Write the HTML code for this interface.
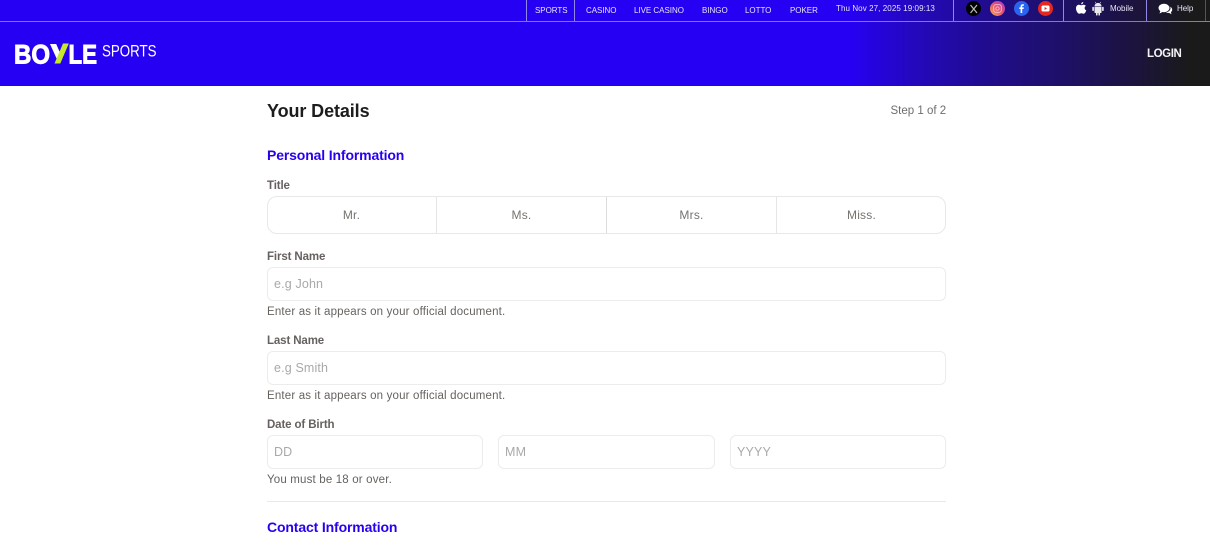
<!DOCTYPE html>
<html lang="en">
<head>
<meta charset="utf-8">
<title>Your Details</title>
<style>
html,body{margin:0;padding:0;width:1210px;height:548px;overflow:hidden;background:#fff;font-family:"Liberation Sans",sans-serif}
.a{position:absolute;white-space:nowrap}
#hd{position:absolute;left:0;top:0;width:1210px;height:86px;background:linear-gradient(90deg,#2600f2 0,#2600f2 850px,#2408c0 910px,#200c90 980px,#1e1068 1060px,#1c1340 1130px,#1a1a1a 1190px)}
#ln{position:absolute;left:0;top:21px;width:1210px;height:1px;background:#7f76e0}
.nv{position:absolute;top:6px;font-size:8px;line-height:10px;color:#e6e4ff;white-space:nowrap;letter-spacing:-.03px}
.vl{position:absolute;top:0;width:1px;height:21px;background:#8f88e8}
.ci{position:absolute;top:1px;width:15px;height:15px;border-radius:50%}
.lb{position:absolute;left:267px;font-size:11.5px;line-height:14px;font-weight:bold;color:#66615f;white-space:nowrap;letter-spacing:-.12px}
.ip{position:absolute;box-sizing:border-box;height:34px;border:1px solid #ececec;border-radius:6px;background:#fff;color:#aaa9a8;font-size:12.5px;line-height:32px;padding-left:6px;letter-spacing:.15px}
.hp{position:absolute;left:267px;font-size:11.5px;line-height:14px;color:#66625f;white-space:nowrap;letter-spacing:.17px}
.sec{position:absolute;left:267px;font-size:14px;line-height:18px;font-weight:bold;color:#2800f0;white-space:nowrap;letter-spacing:-.14px}
.tt{position:absolute;top:197px;height:36px;line-height:36px;text-align:center;font-size:12px;color:#77736f;letter-spacing:.2px}
.dv{position:absolute;top:197px;width:1px;height:36px;background:#e6e6e6}
</style>
</head>
<body>
<div id="hd"></div>
<div id="ln"></div>

<div class="vl" style="left:526px"></div>
<div class="vl" style="left:574px"></div>
<div class="nv" style="left:535px">SPORTS</div>
<div class="nv" style="left:586px">CASINO</div>
<div class="nv" style="left:634px">LIVE CASINO</div>
<div class="nv" style="left:702px">BINGO</div>
<div class="nv" style="left:745px">LOTTO</div>
<div class="nv" style="left:790px">POKER</div>
<div class="nv" style="left:836px;top:4px;letter-spacing:.08px">Thu Nov 27, 2025 19:09:13</div>
<div class="vl" style="left:953px"></div>
<div class="vl" style="left:1063px"></div>
<div class="vl" style="left:1146px"></div>
<div class="vl" style="left:1205px;background:#555"></div>

<div class="ci" style="left:966px;background:#000"></div>
<svg class="a" style="left:966px;top:1px" width="16" height="16" viewBox="0 0 16 16"><path d="M4.500 4 L11 12 M11 4 L4.500 12" stroke="#bbb" stroke-width="1.200" fill="none"/></svg>
<div class="ci" style="left:990px;background:linear-gradient(45deg,#f8b646,#e8506e 50%,#a33cd0)"></div>
<svg class="a" style="left:990px;top:1px" width="15" height="15" viewBox="0 0 15 15"><rect x="3.700" y="3.700" width="7.600" height="7.600" rx="2" fill="none" stroke="#f5c0d8" stroke-width=".9"/><circle cx="7.500" cy="7.500" r="1.700" fill="none" stroke="#f5c0d8" stroke-width=".9"/></svg>
<div class="ci" style="left:1014px;background:#2a63ee"></div>
<svg class="a" style="left:1014px;top:1px" width="15" height="15" viewBox="0 0 15 15"><path d="M8.200 12V8h1.400l.2-1.600H8.200V5.500c0-.5.2-.8.8-.8h.9V3.300h-1.200C7.500 3.300 6.600 4.100 6.600 5.400v1H5.300V8h1.300v4z" fill="#fff"/></svg>
<div class="ci" style="left:1038px;background:#e7261f"></div>
<svg class="a" style="left:1038px;top:1px" width="15" height="15" viewBox="0 0 15 15"><rect x="3.500" y="4.500" width="8" height="6" rx="1.500" fill="#fff"/><path d="M6.600 6v3l2.400-1.500z" fill="#e7261f"/></svg>

<svg class="a" style="left:1075px;top:1px" width="12" height="15" viewBox="0 0 12 15"><path d="M8.300 1c.1 1-.8 2.300-2.100 2.300C6 2.200 7.100 1.100 8.300 1zM6.100 4.300c.6 0 1.400-.6 2.500-.6 1 0 1.800.5 2.300 1.200-1.900 1.100-1.600 3.700.4 4.500-.5 1.400-1.600 3.400-2.800 3.400-.8 0-1.100-.5-2.100-.5s-1.300.5-2.100.5C2.800 12.800 1 9.900 1 7.400 1 5 2.500 3.800 3.900 3.800c1 0 1.700.5 2.200.5z" fill="#fff"/></svg>
<svg class="a" style="left:1091px;top:1px" width="14" height="15" viewBox="0 0 14 15"><path d="M3.500 5.200a3.500 3.300 0 0 1 7 0zM3.500 5.800h7v5.400c0 .5-.3.800-.8.800H9v1.800a.8.800 0 0 1-1.600 0V12H6.600v1.800a.8.800 0 0 1-1.600 0V12h-.7c-.5 0-.8-.3-.8-.8z" fill="#e8e8ee"/><rect x="1.300" y="5.800" width="1.600" height="4.200" rx=".8" fill="#e8e8ee"/><rect x="11.100" y="5.800" width="1.600" height="4.200" rx=".8" fill="#e8e8ee"/><path d="M5 2.200 4.200 1M9 2.200 9.800 1" stroke="#e8e8ee" stroke-width=".6"/></svg>
<div class="nv" style="left:1110px;top:4px;color:#e8e6f5">Mobile</div>
<svg class="a" style="left:1158px;top:2px" width="15" height="14" viewBox="0 0 15 14"><ellipse cx="6" cy="6" rx="5.500" ry="4.200" fill="#fff"/><path d="M2.500 8.500 1.500 11.500 5 9.800z" fill="#fff"/><path d="M12.200 4.800c1.300.7 2 1.700 2 2.900 0 1-.5 1.800-1.300 2.400l.6 2.100-2.500-1.300c-1 .2-2.400.1-3.300-.5 2.600-.2 4.800-2 4.800-4.300z" fill="#fff"/></svg>
<div class="nv" style="left:1177px;top:4px;color:#e8e6f5">Help</div>

<svg class="a" style="left:12px;top:38px" width="150" height="32" viewBox="0 0 150 32">
<text x="2" y="25.500" font-family="Liberation Sans" font-weight="bold" font-size="27" fill="#fff" stroke="#fff" stroke-width="1" textLength="36" lengthAdjust="spacingAndGlyphs">BO</text>
<path d="M38 6h6.200l5 11.500-3 6.500z" fill="#fff"/>
<path d="M51 5.500h5.800l-8.500 20h-5.800z" fill="#c6e82a"/>
<text x="56.500" y="25.500" font-family="Liberation Sans" font-weight="bold" font-size="27" fill="#fff" stroke="#fff" stroke-width="1" textLength="28.500" lengthAdjust="spacingAndGlyphs">LE</text>
<text x="90" y="18.500" font-family="Liberation Sans" font-size="16.500" fill="#fff" textLength="54.500" lengthAdjust="spacingAndGlyphs">SPORTS</text>
</svg>

<div class="a" style="left:1147px;top:47px;font-size:11.5px;line-height:14px;font-weight:bold;color:#f4f4f4;letter-spacing:-.4px">LOGIN</div>

<div class="a" style="left:267px;top:100px;font-size:18px;line-height:22px;font-weight:bold;color:#1e1c1c;letter-spacing:-.1px">Your Details</div>
<div class="a" style="left:890.500px;top:104px;font-size:11.5px;line-height:14px;color:#6f6d6c">Step 1 of 2</div>

<div class="sec" style="top:146px">Personal Information</div>

<div class="lb" style="top:179px">Title</div>
<div class="a" style="left:267px;top:196px;width:679px;height:38px;box-sizing:border-box;border:1px solid #e8e8e8;border-radius:10px"></div>
<div class="dv" style="left:436px"></div>
<div class="dv" style="left:606px;background:#dcdcdc"></div>
<div class="dv" style="left:776px"></div>
<div class="tt" style="left:267px;width:169px">Mr.</div>
<div class="tt" style="left:437px;width:169px">Ms.</div>
<div class="tt" style="left:607px;width:169px">Mrs.</div>
<div class="tt" style="left:777px;width:169px">Miss.</div>

<div class="lb" style="top:250px">First Name</div>
<div class="ip" style="left:267px;top:267px;width:679px">e.g John</div>
<div class="hp" style="top:305px">Enter as it appears on your official document.</div>

<div class="lb" style="top:334px">Last Name</div>
<div class="ip" style="left:267px;top:351px;width:679px">e.g Smith</div>
<div class="hp" style="top:389px">Enter as it appears on your official document.</div>

<div class="lb" style="top:418px">Date of Birth</div>
<div class="ip" style="left:267px;top:435px;width:216px">DD</div>
<div class="ip" style="left:498px;top:435px;width:217px">MM</div>
<div class="ip" style="left:730px;top:435px;width:216px">YYYY</div>
<div class="hp" style="top:473px">You must be 18 or over.</div>

<div class="a" style="left:267px;top:501px;width:679px;height:1px;background:#e9e9e9"></div>
<div class="sec" style="top:518px">Contact Information</div>
</body>
</html>
